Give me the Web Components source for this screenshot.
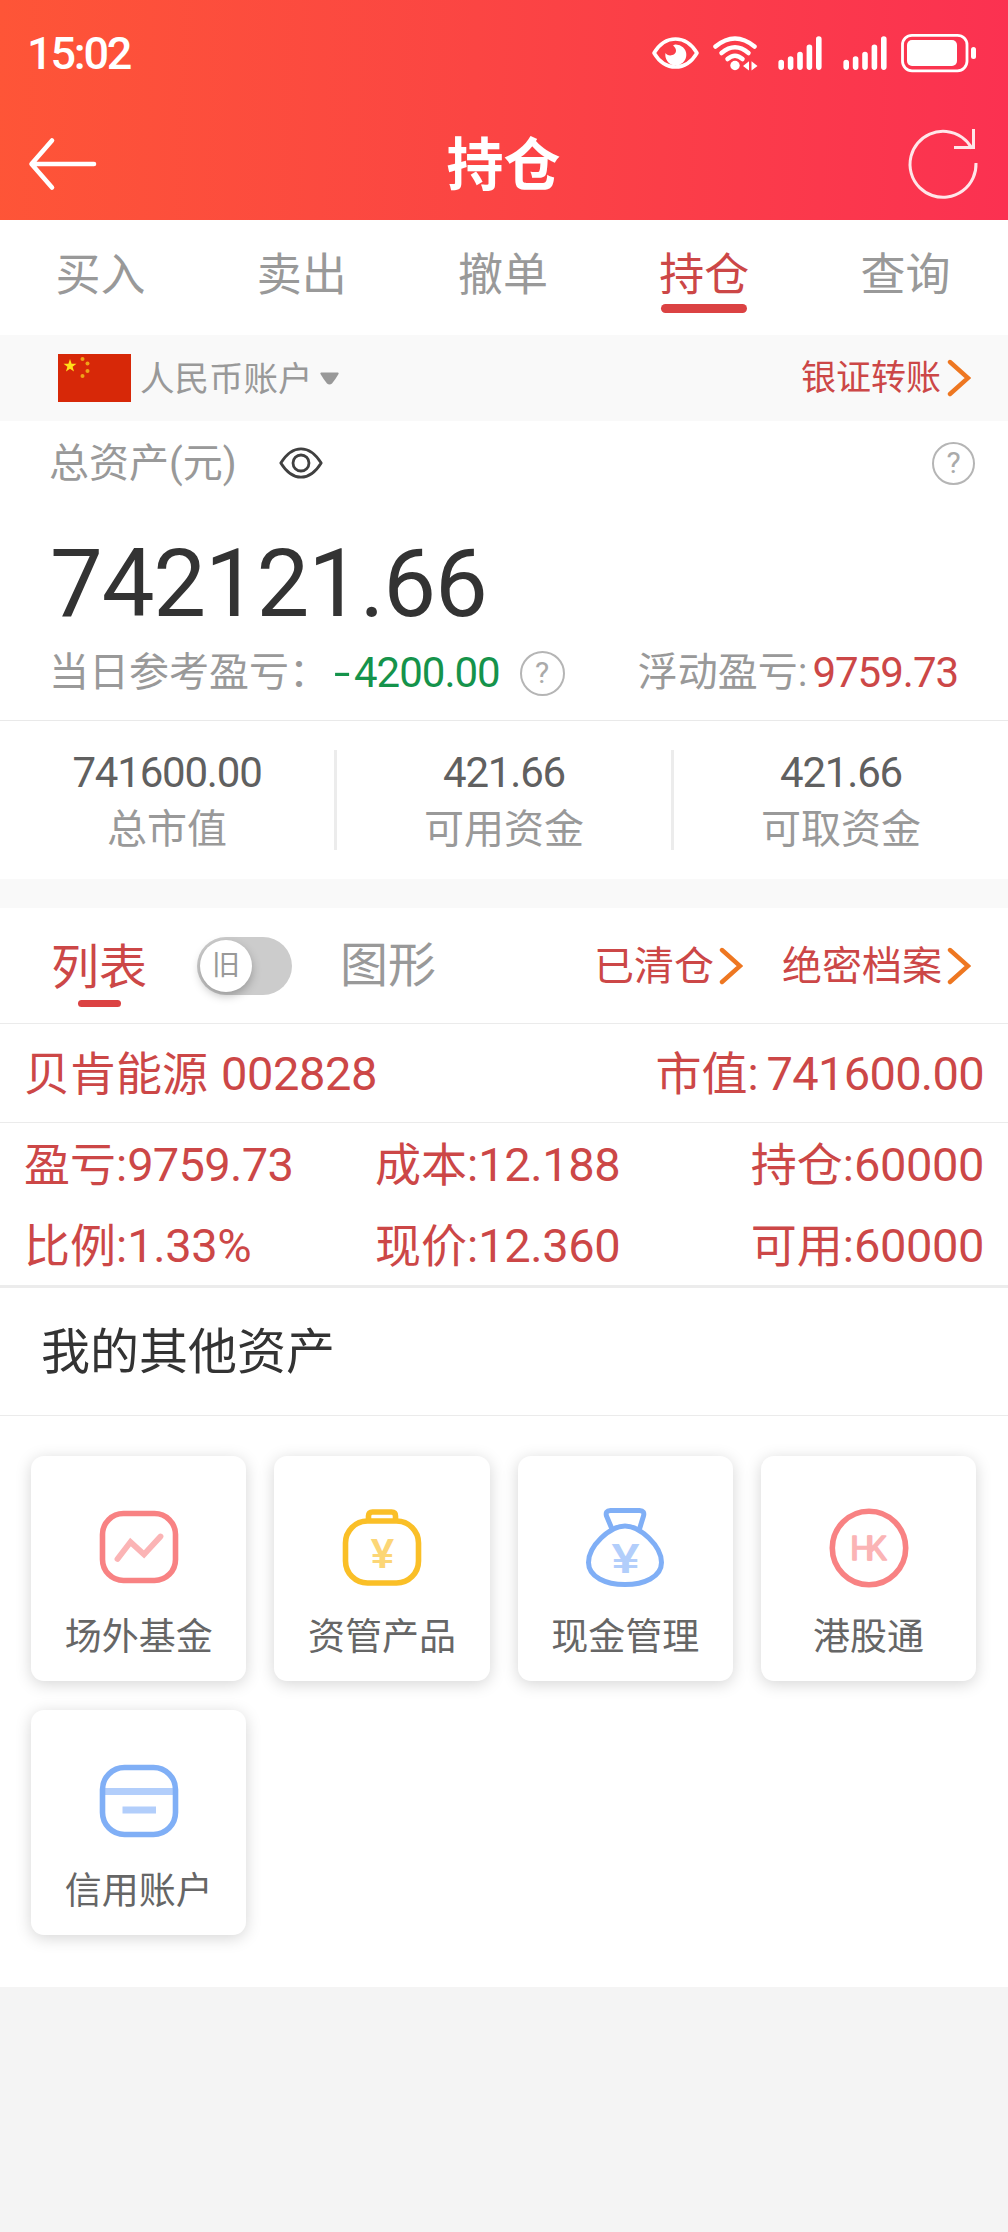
<!DOCTYPE html>
<html lang="zh-CN">
<head>
<meta charset="utf-8">
<title>持仓</title>
<style>
html,body{margin:0;padding:0;background:#f4f4f4}
body{width:1008px;height:2232px;overflow:hidden;font-family:Roboto,"Noto Sans CJK SC",sans-serif}
</style>
</head>
<body>
<holdings-page></holdings-page>
<script>
const define = (name, html) => {
  const t = document.createElement('template');
  t.innerHTML = '<style>*{box-sizing:border-box}svg{display:block;flex:none}</style>' + html;
  customElements.define(name, class extends HTMLElement {
    constructor() {
      super();
      this.attachShadow({ mode: 'open' }).appendChild(t.content.cloneNode(true));
    }
  });
};

/* digits */
define('num-text', `<style>:host{display:inline-block;font-size:var(--n,47px);letter-spacing:var(--ls,-.0085em);white-space:nowrap}</style><slot></slot>`);

define('status-bar', `<style>
:host{display:flex;height:108px;padding:0 31px 0 27px;color:#fff;align-items:center;justify-content:space-between}
.time{font-size:45px;font-weight:500;line-height:54px;letter-spacing:-2.200px;margin-top:0}
.icons{display:flex}
</style>
<span class="time">15:02</span>
<svg class="icons" width="326" height="44" viewBox="652 32 326 44" fill="none" stroke="#fff">
<path d="M655 53C661 43 668 39 676.500 39S692 43 698 53C692 63 685 67 676.500 67S661 63 655 53Z" stroke-width="3.600" stroke-linejoin="round"/>
<path d="M676 44.500A10.500 10.500 0 1 1 666.500 53C668.500 57 677 56 677 50.500C677 48 675.500 47 674 45.500Z" fill="#fff" stroke="none"/>
<g stroke-width="4.500" stroke-linecap="round"><path d="M716.500 46.500Q736 30.500 755.500 46.500"/><path d="M722.500 53Q736 41.500 749.500 53"/><path d="M728.500 59Q736 52.500 743.500 59"/></g>
<circle cx="736" cy="65.500" r="4.700" fill="#fff" stroke="none"/>
<path d="M744 66l6-4.800v9.400zM758.500 66l-6-4.800v9.400z" fill="#fff" stroke="none"/>
<g stroke-width="5.600" stroke-linecap="round"><path d="M782.200 62.500v4.600M791.600 59v8.100M801 54.500v12.600M810.400 47.300v19.800M819.800 39v28.100"/><path d="M847.200 62.500v4.600M856.600 59v8.100M866 54.500v12.600M875.400 47.300v19.800M884.800 39v28.100"/></g>
<rect x="903.500" y="35.300" width="64.500" height="35.500" rx="9.500" stroke-width="2.800"/>
<rect x="908" y="40" width="50" height="26" rx="5" fill="#fff" stroke="none"/>
<rect x="972" y="47" width="5" height="12" rx="2.500" fill="#fff" stroke="none"/>
</svg>`);

define('nav-bar', `<style>
:host{display:flex;height:112px;padding:0 29px;color:#fff;align-items:center;justify-content:space-between}
h1{margin:0;font-size:57px;font-weight:700;line-height:80px;padding-top:3px;width:114px;white-space:nowrap}
.back{margin-left:-1px;margin-right:2px}
</style>
<svg class="back" width="70" height="60" viewBox="28 133 70 60" fill="none" stroke="#fff" stroke-width="4.600" stroke-linecap="round" stroke-linejoin="round"><path d="M94 163H32M52 139.500L31.500 163L52 186.500"/></svg>
<h1>持仓</h1>
<svg width="72" height="74" viewBox="908 126 72 74" fill="none" stroke="#fff" stroke-opacity=".88" stroke-width="3"><path d="M977 162A33 33 0 1 1 973 147.500M974.500 128V146.500H955"/></svg>`);

define('trade-tab', `<style>
:host{flex:1;display:flex;flex-direction:column;align-items:center;padding-top:26px;color:#999;font-size:45px;line-height:60px}
:host([active]){color:#cc4747}
i{display:none;width:86px;height:9px;border-radius:5px;background:#db4243;margin-top:-2px}
:host([active]) i{display:block}
</style><slot></slot><i></i>`);
define('trade-tabs', `<style>:host{display:flex;height:115px;background:#fff;padding-right:2px}</style><slot></slot>`);

/* red label followed by an orange chevron */
define('more-link', `<style>
:host{display:flex;align-items:center;color:#cc4747;line-height:60px;white-space:nowrap}
svg{margin-left:var(--gap,6px)}
span{padding-top:2px}
</style><span><slot></slot></span>
<svg width="24" height="38" viewBox="0 0 24 38" fill="none" stroke="#ee7721" stroke-width="4.400" stroke-linecap="round"><path d="M3 3L21 19L3 35"/></svg>`);

define('account-bar', `<style>
:host{display:flex;height:86px;padding:0 37px 0 58px;background:#f9f9f9;align-items:center;color:#999}
.name{font-size:34.500px;line-height:60px;margin-left:9px;padding-top:1px}
.tri{margin-left:7px;margin-top:1px}
more-link{margin-left:auto;font-size:35px}
</style>
<svg width="73" height="48" viewBox="0 0 73 48"><rect width="73" height="48" fill="#d72808"/>
<polygon fill="#ffe11a" points="12,5 13.600,9.700 18.500,9.800 14.600,12.700 16,17.500 12,14.700 8,17.500 9.400,12.700 5.500,9.800 10.400,9.700"/>
<g fill="#f0a318"><circle cx="24.500" cy="5" r="2"/><circle cx="29.500" cy="9.500" r="2"/><circle cx="29.500" cy="17" r="2"/><circle cx="24.500" cy="22" r="2"/></g></svg>
<span class="name">人民币账户</span>
<svg class="tri" width="19" height="13" viewBox="0 0 19 13"><path d="M1 .5H18Q19 1 18.500 2Q15 8 12 11.500Q9.500 13.500 7 11.500Q4 8 .5 2Q0 1 1 .5Z" fill="#999"/></svg>
<more-link>银证转账</more-link>`);

define('help-icon', `<style>
:host{display:flex;flex:none;width:var(--d,43px);height:var(--d,43px);border:2px solid #b5b5b5;border-radius:50%;align-items:center;justify-content:center;color:#aaa;font-size:30px;line-height:40px}
</style><span>?</span>`);

define('asset-summary', `<style>
:host{display:block;height:300px;background:#fff;border-bottom:1px solid #e9e9e9;color:#999;font-size:40px}
.top{display:flex;align-items:center;height:84px;padding:0 33px 0 49px}
.top span{line-height:60px;padding-top:1px}
.top svg{margin-left:42px}
.top help-icon{margin-left:auto}
.big{display:flex;padding:24px 0 0 50px;height:134px;--n:94px;--ls:-1.200px;color:#333}
.big num-text{line-height:110px}
.pl{display:flex;align-items:center;padding:2px 0 0 49px;height:66px;--n:42px;--ls:-1px}
.g{color:#15934b;margin-left:5px}
.g span{display:inline-block;width:20px;transform:scaleX(1.4);transform-origin:0 50%}
.r{color:#cc4747;margin-left:5px}
.pl help-icon{--d:45px;margin-left:20px}
.f{margin-left:73px;white-space:nowrap}
.pl>span,.pl>num-text{line-height:60px}
</style>
<div class="top"><span>总资产(元)</span>
<svg width="44" height="32" viewBox="0 0 44 32" fill="none" stroke="#404040" stroke-width="2.800"><path d="M1.800 16C8 6 14 1.800 22 1.800S36 6 42.200 16C36 26 30 30.200 22 30.200S8 26 1.800 16Z" stroke-linejoin="round"/><circle cx="22" cy="16" r="8"/></svg>
<help-icon></help-icon></div>
<div class="big"><num-text>742121.66</num-text></div>
<div class="pl"><span>当日参考盈亏：</span><num-text class="g"><span>-</span>4200.00</num-text><help-icon></help-icon><span class="f">浮动盈亏:</span><num-text class="r">9759.73</num-text></div>`);

define('stat-cell', `<style>
:host{flex:1;display:flex;flex-direction:column;align-items:center;color:#999;font-size:40px;line-height:56px}
num-text{--n:42px;--ls:-1.200px;color:#606060;line-height:56px}
.label{padding-top:1px}
</style><num-text><slot name="value"></slot></num-text><span class="label"><slot></slot></span>`);
define('stat-row', `<style>
:host{display:flex;height:158px;background:#fff;padding:24px 0 0}
i{width:3px;height:100px;background:#ececec;margin-top:5px}
</style>
<stat-cell><span slot="value">741600.00</span>总市值</stat-cell><i></i>
<stat-cell><span slot="value">421.66</span>可用资金</stat-cell><i></i>
<stat-cell><span slot="value">421.66</span>可取资金</stat-cell>`);

define('view-switch', `<style>
:host{display:flex;height:116px;margin-top:29px;padding:0 37px 0 50px;background:#fff;border-bottom:1px solid #ebebeb;align-items:center;font-size:48px;line-height:60px;color:#999}
.on{color:#cc4747;display:flex;flex-direction:column;align-items:center;width:98px;padding-top:13px}
.on i{width:43px;height:7px;border-radius:4px;background:#db4243;margin-top:2px}
.toggle{display:flex;width:95px;height:58px;border-radius:29px;background:#ccc;margin:0 48px 0 49px;padding:3px}
.knob{width:52px;height:52px;border-radius:50%;background:#fff;box-shadow:0 4px 10px rgba(0,0,0,.25);display:flex;align-items:center;justify-content:center;font-size:28px;line-height:40px}
.graph{padding-top:1px}
more-link{font-size:40px;margin-left:39px;--gap:5px}
more-link.first{margin-left:auto}
</style>
<div class="on"><span>列表</span><i></i></div>
<div class="toggle"><div class="knob">旧</div></div>
<span class="graph">图形</span>
<more-link class="first">已清仓</more-link><more-link>绝密档案</more-link>`);

define('position-card', `<style>
:host{display:block;background:#fff;border-bottom:3px solid #ececec;color:#cc4747;font-size:46px;line-height:60px;white-space:nowrap}
.head{display:flex;justify-content:space-between;align-items:center;height:99px;padding:2px 24px 0 24px;border-bottom:1px solid #ebebeb}
.grid{display:grid;grid-template-columns:351px 1fr auto;grid-auto-rows:80.500px;padding:2px 24px 0 24px;height:162px;align-items:center}
num-text{line-height:60px}
.d{--ls:-.700px}
</style>
<div class="head"><span>贝肯能源<num-text style="margin-left:13px">002828</num-text></span><span>市值:<num-text class="d" style="margin-left:8px">741600.00</num-text></span></div>
<div class="grid"><span>盈亏:<num-text class="d">9759.73</num-text></span><span>成本:<num-text>12.188</num-text></span><span>持仓:<num-text>60000</num-text></span>
<span>比例:<num-text>1.33%</num-text></span><span>现价:<num-text>12.360</num-text></span><span>可用:<num-text>60000</num-text></span></div>`);

define('asset-tile', `<style>
:host{display:flex;flex-direction:column;align-items:center;height:225px;padding-top:52px;border-radius:13px;background:#fff;box-shadow:0 3px 16px rgba(0,0,0,.17);font-size:37px;line-height:50px;color:#666}
span{margin-top:25px}
</style><slot name="icon"></slot><span><slot></slot></span>`);

define('other-assets', `<style>
:host{display:block;height:699px;background:#fff}
h2{margin:0;height:128px;padding:35px 0 0 41px;font-weight:400;font-size:49px;line-height:60px;color:#333;border-bottom:1px solid #ebebeb}
.grid{display:grid;grid-template-columns:repeat(4,215.300px);column-gap:28px;row-gap:28.500px;padding:40px 31px}
svg{width:80px;height:80px}
text{font-family:"Liberation Sans",sans-serif;font-weight:700;text-anchor:middle}
.hk{font-family:Roboto,sans-serif;font-weight:400}
</style>
<h2>我的其他资产</h2>
<div class="grid">
<asset-tile><svg slot="icon" viewBox="0 0 80 80" fill="none"><rect x="3.500" y="5.500" width="73" height="67" rx="21" stroke="#f88283" stroke-width="5.600"/><path d="M18.500 51L31.500 34L45 46.500L61.500 28.500" stroke="#fbb4b5" stroke-width="5.800" stroke-linecap="round"/></svg>场外基金</asset-tile>
<asset-tile><svg slot="icon" viewBox="0 0 80 80" fill="none" stroke="#fabf27" stroke-width="5.600"><rect x="3.500" y="13" width="73" height="62" rx="22"/><path d="M26.500 12V8Q26.500 4 30.500 4H49.500Q53.500 4 53.500 8V12"/><text x="40.500" y="60" font-size="42" fill="#fcd676" stroke="none">¥</text></svg>资管产品</asset-tile>
<asset-tile><svg slot="icon" viewBox="0 0 80 80" fill="none" stroke="#80aff6" stroke-width="5"><path d="M40 18C55 18 76.500 38 76.500 54.500C76.500 69 59 76.500 40 76.500S3.500 69 3.500 54.500C3.500 38 25 18 40 18Z"/><path d="M27 21L21.500 8Q20 2.800 25.500 2.500H54.500Q60 2.800 58.500 8L54.500 21"/><text x="40.500" y="65" font-size="43" textLength="28" lengthAdjust="spacingAndGlyphs" fill="#b2cefb" stroke="none">¥</text></svg>现金管理</asset-tile>
<asset-tile><svg slot="icon" viewBox="0 0 80 80" fill="none"><circle cx="40" cy="40" r="36.700" stroke="#f88283" stroke-width="5.600"/><text class="hk" x="35.300" y="52" font-size="33" letter-spacing="-8" fill="#fbb4b5" stroke="#fbb4b5" stroke-width="1.600" stroke-linejoin="round">HK</text></svg>港股通</asset-tile>
<asset-tile><svg slot="icon" viewBox="0 0 80 80" fill="none"><path d="M6 29.500H74M23.500 48H57" stroke="#b2cefb" stroke-width="7"/><rect x="3.500" y="5.500" width="73" height="67" rx="22" stroke="#80aff6" stroke-width="5.600"/></svg>信用账户</asset-tile>
</div>`);

define('holdings-page', `<style>
:host{display:block;width:1008px;background:#f9f9f9}
header{background:linear-gradient(92deg,#fe5537 0%,#fb4543 47%,#fb3151 100%)}
</style>
<header><status-bar></status-bar><nav-bar></nav-bar></header>
<trade-tabs><trade-tab>买入</trade-tab><trade-tab>卖出</trade-tab><trade-tab>撤单</trade-tab><trade-tab active>持仓</trade-tab><trade-tab>查询</trade-tab></trade-tabs>
<account-bar></account-bar>
<asset-summary></asset-summary>
<stat-row></stat-row>
<view-switch></view-switch>
<position-card></position-card>
<other-assets></other-assets>`);
</script>
</body>
</html>
